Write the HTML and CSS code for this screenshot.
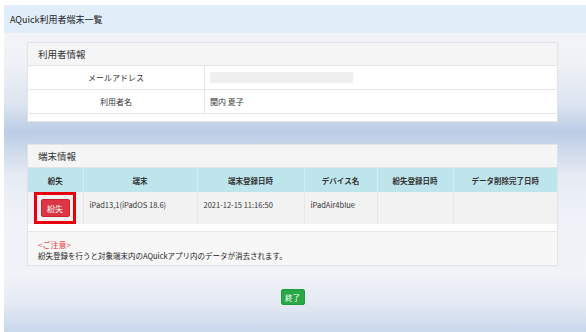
FILE: index.html
```html
<!DOCTYPE html>
<html lang="ja">
<head>
<meta charset="utf-8">
<link rel="stylesheet" href="styles.css">
</head>
<body>
<div class="page">
  <div class="topbar">AQuick利用者端末一覧</div>
  <div class="content">
    <section class="card">
      <div class="card-title">利用者情報</div>
      <table class="info">
        <tr><th>メールアドレス</th><td><span class="masked"></span></td></tr>
        <tr><th>利用者名</th><td>関内 夏子</td></tr>
      </table>
      <div class="card-foot"></div>
    </section>

    <section class="card card2">
      <div class="card-title">端末情報</div>
      <table class="devices">
        <colgroup>
          <col class="c1"><col class="c2"><col class="c3"><col class="c4"><col class="c5"><col class="c6">
        </colgroup>
        <thead>
          <tr><th>紛失</th><th>端末</th><th>端末登録日時</th><th>デバイス名</th><th>紛失登録日時</th><th>データ削除完了日時</th></tr>
        </thead>
        <tbody>
          <tr>
            <td class="lost-cell"><div class="hl"><button class="btn-lost">紛失</button></div></td>
            <td>iPad13,1(iPadOS 18.6)</td>
            <td>2021-12-15 11:16:50</td>
            <td>iPadAir4blue</td>
            <td></td>
            <td></td>
          </tr>
        </tbody>
      </table>
      <div class="note">
        <div class="note-title">&lt;ご注意&gt;</div>
        <div class="note-text">紛失登録を行うと対象端末内のAQuickアプリ内のデータが消去されます。</div>
      </div>
    </section>

    <div class="actions"><button class="btn-end">終了</button></div>
  </div>
</div>
</body>
</html>
```

FILE: styles.css
```css
html { background: #ffffff; }
body {
  margin: 5px 0 0 4px;
  font-family: "Noto Sans CJK JP", "Noto Sans", sans-serif;
  color: #333;
}
.page {
  height: 327px;
  background: linear-gradient(to bottom,
    #f3f4f8 28px, #eef1f6 60px, #dce4f0 100px, #bacce6 127px,
    #c9d6ea 140px, #e6ebf4 170px, #eff2f8 210px, #f1f3f8 270px,
    #e3e9f3 300px, #c9d7ec 327px);
  overflow: hidden;
}
.topbar {
  height: 28px;
  background: #e1eefa;
  display: flex;
  align-items: center;
  padding-left: 6px;
  font-size: 9px;
  color: #222;
}
.content {
  padding: 9px 28px 0 23px;
}
.card {
  background: #fff;
  border: 1px solid #e2e4e8;
  box-shadow: 0 0 1px rgba(0,0,0,0.05);
}
.card2 { margin-top: 22px; }
.card-title {
  height: 22px;
  background: #f5f5f5;
  border-bottom: 1px solid #e2e2e2;
  display: flex;
  align-items: center;
  padding-left: 10px;
  font-size: 9.5px;
  color: #333;
}
table {
  border-collapse: collapse;
  width: 100%;
  table-layout: fixed;
}
.info th, .info td {
  height: 23px;
  border-bottom: 1px solid #e6e6e6;
  font-size: 8px;
  font-weight: normal;
  padding: 0;
}
.info th {
  width: 176px;
  text-align: center;
  border-right: 1px solid #e6e6e6;
}
.info td {
  padding-left: 5px;
  text-align: left;
}
.masked {
  display: block;
  width: 143px;
  height: 11px;
  background: #efefef;
}
.card-foot { height: 7px; }

.devices th {
  background: #bfe5ec;
  height: 24px;
  font-size: 7.5px;
  font-weight: bold;
  color: #333;
  border-right: 1px solid #d6eef2;
  padding: 0;
}
.devices td {
  background: #f2f2f2;
  height: 32px;
  box-sizing: border-box;
  vertical-align: top;
  font-size: 7.5px;
  padding: 7px 0 0 6px;
  border-right: 1px solid #e6e6e6;
  color: #333;
}
.devices th:last-child, .devices td:last-child { border-right: none; }
.c1 { width: 55px; }
.c2 { width: 114px; }
.c3 { width: 107px; }
.c4 { width: 73px; }
.c5 { width: 76px; }
.devices td.lost-cell {
  padding: 0 0 0 6px;
  vertical-align: middle;
}
.hl {
  display: flex;
  align-items: center;
  justify-content: center;
  width: 36px;
  height: 26px;
  border: 3px solid #e8000c;
}
.btn-lost {
  font-family: inherit;
  width: 29px;
  height: 18px;
  padding: 0;
  border: 1px solid #c82333;
  border-radius: 2px;
  background: #dc3545;
  color: #fff;
  font-size: 8px;
}
.note {
  margin-top: 7px;
  border-top: 1px solid #e6e6e6;
  background: #f7f7f7;
  padding: 7px 10px 3px 10px;
  height: 23px;
}
.note-title {
  color: #e2413f;
  font-size: 8px;
  line-height: 11px;
}
.note-text {
  font-size: 7.5px;
  line-height: 12px;
  color: #222;
}
.actions {
  display: flex;
  justify-content: center;
  padding-top: 23px;
  padding-left: 0;
}
.btn-end {
  font-family: inherit;
  width: 24px;
  height: 16px;
  padding: 0;
  border: 1px solid #1e9e3a;
  border-radius: 2px;
  background: #28a745;
  color: #fff;
  font-size: 7.5px;
}
```
